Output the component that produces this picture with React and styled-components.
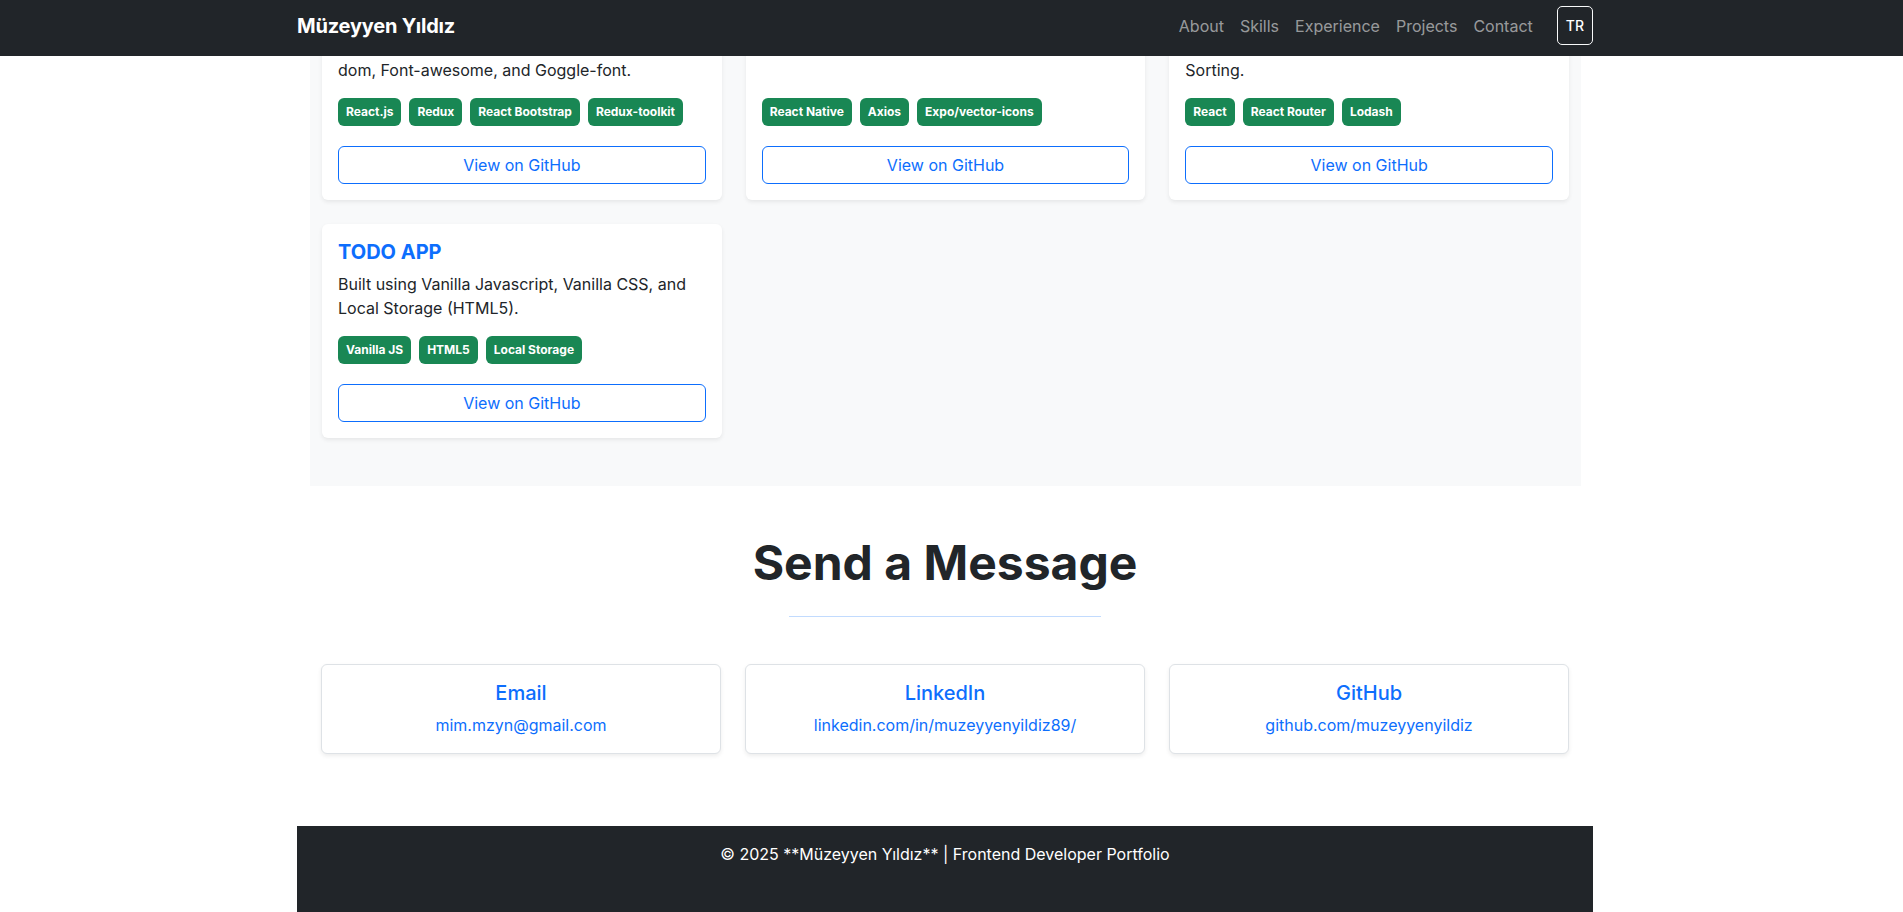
import React from 'react'
import styled, { createGlobalStyle } from 'styled-components'

const GlobalStyle = createGlobalStyle`
    body {
        margin: 0;
        padding-right: 13px;
        font-family: Inter, 'Noto Sans', 'Liberation Sans', sans-serif;
        font-size: 16px;
        line-height: 1.5;
        color: #212529;
        background: #fff;
    }
    * {
        box-sizing: border-box;
    }
`

const Navbar = styled.nav`
    position: fixed;
    top: 0;
    left: 0;
    right: 0;
    z-index: 10;
    height: 56px;
    padding-right: 13px;
    background: #212529;
`

const NavInner = styled.div`
    max-width: 1320px;
    height: 100%;
    margin: 0 auto;
    padding: 0 12px 5px;
    display: flex;
    align-items: center;
    justify-content: space-between;
`

const Brand = styled.a`
    color: #fff;
    font-size: 20px;
    font-weight: 700;
    text-decoration: none;
    letter-spacing: -0.2px;
`

const NavRight = styled.div`
    display: flex;
    align-items: center;
    gap: 24px;
`

const NavList = styled.ul`
    display: flex;
    gap: 16px;
    list-style: none;
    margin: 0;
    padding: 0;
`

const NavLink = styled.a`
    display: block;
    color: rgba(255, 255, 255, 0.55);
    text-decoration: none;
    font-size: 16px;
`

const LangButton = styled.button`
    font-family: inherit;
    font-size: 14px;
    font-weight: 500;
    line-height: 21px;
    color: #fff;
    background: transparent;
    border: 1px solid #f8f9fa;
    border-radius: 5px;
    padding: 8px;
    cursor: pointer;
`

const Container = styled.main`
    max-width: 1320px;
    margin: 0 auto;
    padding: 0 12px;
`

const ProjectsSection = styled.section`
    margin: 0 12px 0 13px;
    padding: 42px 12px 48px;
    background: #f8f9fa;
`

const Grid = styled.div`
    display: grid;
    grid-template-columns: repeat(3, 1fr);
    gap: 24px;
`

const ProjectCard = styled.div`
    display: flex;
    flex-direction: column;
    padding: 16px;
    background: #fff;
    border-radius: 6px;
    box-shadow: 0 2px 4px rgba(0, 0, 0, 0.075);
`

const ProjectTitle = styled.h5`
    margin: 0 0 8px;
    font-size: 20px;
    font-weight: 700;
    line-height: 24px;
    color: #0d6efd;
`

const Description = styled.p`
    margin: 0 0 16px;
`

const Tags = styled.div`
    display: flex;
    flex-wrap: wrap;
    gap: 8px;
    margin-top: auto;
`

const Badge = styled.span`
    padding: 8px;
    font-size: 12px;
    font-weight: 700;
    line-height: 1;
    color: #fff;
    background: #198754;
    border-radius: 6px;
`

const GitHubButton = styled.a`
    display: block;
    margin-top: 20px;
    padding: 6px 12px;
    border: 1px solid #0d6efd;
    border-radius: 6px;
    color: #0d6efd;
    text-align: center;
    text-decoration: none;
    font-size: 16px;
    line-height: 24px;
`

const ContactSection = styled.section`
    padding: 48px 24px 72px;
    text-align: center;
`

const Heading = styled.h2`
    margin: 0 0 24px;
    font-size: 48px;
    font-weight: 700;
    line-height: 1.2;
    color: #212529;
`

const Divider = styled.hr`
    width: 25%;
    margin: 0 auto 47px;
    border: 0;
    border-top: 1px solid #0d6efd;
    opacity: 0.25;
`

const ContactCard = styled.div`
    padding: 16px;
    background: #fff;
    border: 1px solid #dee2e6;
    border-radius: 6px;
    box-shadow: 0 2px 4px rgba(0, 0, 0, 0.075);
`

const ContactTitle = styled.h5`
    margin: 0 0 8px;
    font-size: 20px;
    font-weight: 500;
    line-height: 24px;
    color: #0d6efd;
`

const ContactLink = styled.a`
    display: block;
    color: #0d6efd;
    text-decoration: none;
`

const Footer = styled.footer`
    padding: 16px 0 72px;
    background: #212529;
    color: #fff;
    text-align: center;
`

const NAV_ITEMS = ['About', 'Skills', 'Experience', 'Projects', 'Contact']

// the first row is scrolled under the navbar: only the tail of each card shows
const PROJECTS = [
    {
        id: 'shop',
        description: 'dom, Font-awesome, and Goggle-font.',
        tags: ['React.js', 'Redux', 'React Bootstrap', 'Redux-toolkit'],
    },
    {
        id: 'mobile',
        tags: ['React Native', 'Axios', 'Expo/vector-icons'],
    },
    {
        id: 'countries',
        description: 'Sorting.',
        tags: ['React', 'React Router', 'Lodash'],
    },
    {
        id: 'todo',
        title: 'TODO APP',
        description:
            'Built using Vanilla Javascript, Vanilla CSS, and Local Storage (HTML5).',
        tags: ['Vanilla JS', 'HTML5', 'Local Storage'],
    },
]

const CONTACTS = [
    { title: 'Email', text: 'mim.mzyn@gmail.com' },
    { title: 'LinkedIn', text: 'linkedin.com/in/muzeyyenyildiz89/' },
    { title: 'GitHub', text: 'github.com/muzeyyenyildiz' },
]

const App = () => {
    return (
        <>
            <GlobalStyle />
            <Navbar>
                <NavInner>
                    <Brand href="#">Müzeyyen Yıldız</Brand>
                    <NavRight>
                        <NavList>
                            {NAV_ITEMS.map((item) => (
                                <li key={item}>
                                    <NavLink href={`#${item.toLowerCase()}`}>
                                        {item}
                                    </NavLink>
                                </li>
                            ))}
                        </NavList>
                        <LangButton>TR</LangButton>
                    </NavRight>
                </NavInner>
            </Navbar>

            <Container>
                <ProjectsSection id="projects">
                    <Grid>
                        {PROJECTS.map((p) => (
                            <ProjectCard key={p.id}>
                                {p.title && <ProjectTitle>{p.title}</ProjectTitle>}
                                {p.description && (
                                    <Description>{p.description}</Description>
                                )}
                                <Tags>
                                    {p.tags.map((t) => (
                                        <Badge key={t}>{t}</Badge>
                                    ))}
                                </Tags>
                                <GitHubButton href="#">View on GitHub</GitHubButton>
                            </ProjectCard>
                        ))}
                    </Grid>
                </ProjectsSection>

                <ContactSection id="contact">
                    <Heading>Send a Message</Heading>
                    <Divider />
                    <Grid>
                        {CONTACTS.map((c) => (
                            <ContactCard key={c.title}>
                                <ContactTitle>{c.title}</ContactTitle>
                                <ContactLink href="#">{c.text}</ContactLink>
                            </ContactCard>
                        ))}
                    </Grid>
                </ContactSection>

                <Footer>© 2025 **Müzeyyen Yıldız** | Frontend Developer Portfolio</Footer>
            </Container>
        </>
    )
}

export default App
